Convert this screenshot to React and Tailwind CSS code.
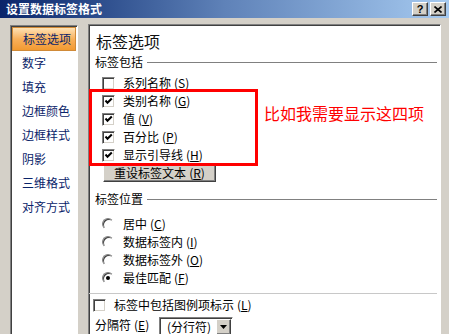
import React from 'react';

const items = ['标签选项', '数字', '填充', '边框颜色', '边框样式', '阴影', '三维格式', '对齐方式'];

function Key({ k }) {
  return (
    <span className="ml-[3px]">
      (<u>{k}</u>)
    </span>
  );
}

function CheckBox({ checked }) {
  return (
    <span className="w-[13px] h-[13px] shrink-0 bg-white border border-t-[#808080] border-l-[#808080] border-b-white border-r-white shadow-[inset_1px_1px_0_#404040,inset_-1px_-1px_0_#d4d0c8] flex items-center justify-center">
      {checked && (
        <svg width="9" height="9" viewBox="0 0 9 9">
          <path d="M1.5 3.5 L3.5 5.8 L7.8 1.5" stroke="#000" strokeWidth="2" fill="none" />
        </svg>
      )}
    </span>
  );
}

function Radio({ checked }) {
  return (
    <span className="w-[12px] h-[12px] shrink-0 rounded-full bg-white border border-t-[#808080] border-l-[#808080] border-b-white border-r-white shadow-[inset_1px_1px_0_#404040] flex items-center justify-center">
      {checked && <span className="w-[4px] h-[4px] rounded-full bg-black" />}
    </span>
  );
}

function Group({ title }) {
  return (
    <div className="h-[14px] flex items-center pl-[6px] pr-[3px]">
      <span>{title}</span>
      <div className="flex-1 h-px bg-[#808080] ml-[4px]" />
    </div>
  );
}

export default function App() {
  return (
    <div className="w-[449px] h-[334px] overflow-hidden bg-[#d4d0c8] flex flex-col text-[12px] leading-none text-black font-['Noto_Sans_CJK_SC','Liberation_Sans',sans-serif]">
      {/* title bar */}
      <div className="h-[18px] shrink-0 flex items-center bg-gradient-to-r from-[#0a246a] via-[#5f82b8] to-[#a6caf0] pl-[6px] pr-[3px]">
        <span className="text-white font-bold text-[12px]">设置数据标签格式</span>
        <div className="ml-auto flex gap-[2px]">
          <button className="w-[16px] h-[14px] bg-[#d4d0c8] border border-t-white border-l-white border-r-[#404040] border-b-[#404040] shadow-[inset_-1px_-1px_0_#808080] flex items-center justify-center text-[11px] font-bold font-['Liberation_Sans',sans-serif]">
            ?
          </button>
          <button className="w-[16px] h-[14px] bg-[#d4d0c8] border border-t-white border-l-white border-r-[#404040] border-b-[#404040] shadow-[inset_-1px_-1px_0_#808080] flex items-center justify-center">
            <svg width="8" height="7" viewBox="0 0 8 7">
              <path d="M0.5 0.5 L7.5 6.5 M7.5 0.5 L0.5 6.5" stroke="#000" strokeWidth="1.6" />
            </svg>
          </button>
        </div>
      </div>

      <div className="flex-1 flex pt-[7px]">
        {/* left list */}
        <div className="ml-[10px] w-[68px] bg-white border border-t-[#808080] border-l-[#808080] border-r-white border-b-white shadow-[inset_1px_1px_0_#404040] pt-[1px] px-[1px]">
          {items.map((t, i) => (
            <div
              key={t}
              className={`h-[24px] flex items-center pl-[10px] text-[#0a246a] text-[12px] ${
                i === 0
                  ? 'bg-gradient-to-b from-[#fde2b4] via-[#f8b05a] to-[#f29a30] border border-[#d08a38]'
                  : ''
              }`}
            >
              {t}
            </div>
          ))}
        </div>

        {/* right panel */}
        <div className="relative ml-[10px] w-[353px] -mt-[1px] bg-white border border-t-[#808080] border-l-[#808080] border-r-white border-b-white shadow-[inset_1px_1px_0_#404040]">
          <div className="flex flex-col pt-[6px]">
            <div className="h-[20px] flex items-center pl-[7px] text-[16px] text-[#111]">标签选项</div>
            <div className="mt-[4px]">
              <Group title="标签包括" />
            </div>
            <div className="mt-[5px] flex flex-col">
              {[
                ['系列名称', 'S', false],
                ['类别名称', 'G', true],
                ['值', 'V', true],
                ['百分比', 'P', true],
                ['显示引导线', 'H', true],
              ].map(([t, k, c]) => (
                <div key={t} className="h-[18px] flex items-center pl-[13px] gap-[8px]">
                  <CheckBox checked={c} />
                  <span>
                    {t}
                    <Key k={k} />
                  </span>
                </div>
              ))}
            </div>
            <div className="ml-[14px]">
              <button className="w-[113px] h-[18px] bg-[#d4d0c8] border border-t-white border-l-white border-r-[#404040] border-b-[#404040] shadow-[inset_-1px_-1px_0_#808080] flex items-center justify-center text-[12px]">
                重设标签文本
                <Key k="R" />
              </button>
            </div>
            <div className="mt-[10px]">
              <Group title="标签位置" />
            </div>
            <div className="mt-[9px] flex flex-col">
              {[
                ['居中', 'C', false],
                ['数据标签内', 'I', false],
                ['数据标签外', 'O', false],
                ['最佳匹配', 'F', true],
              ].map(([t, k, c]) => (
                <div key={t} className="h-[18px] flex items-center pl-[13px] gap-[9px]">
                  <Radio checked={c} />
                  <span>
                    {t}
                    <Key k={k} />
                  </span>
                </div>
              ))}
            </div>
            <div className="mt-[6px] h-px bg-[#c8c8c8] mr-[3px]" />
            <div className="mt-[2px] h-[18px] flex items-center pl-[4px] gap-[8px]">
              <CheckBox checked={false} />
              <span>
                标签中包括图例项标示
                <Key k="L" />
              </span>
            </div>
            <div className="h-[22px] flex items-center pl-[6px]">
              <span className="w-[64px]">
                分隔符
                <Key k="E" />
              </span>
              <div className="mt-[4px] w-[74px] h-[20px] bg-white border border-t-[#808080] border-l-[#808080] border-r-white border-b-white shadow-[inset_1px_1px_0_#404040] flex items-center">
                <span className="flex-1 text-center pl-[2px]">(分行符)</span>
                <span className="w-[15px] h-[16px] mr-[1px] bg-[#d4d0c8] border border-t-white border-l-white border-r-[#404040] border-b-[#404040] shadow-[inset_-1px_-1px_0_#808080] flex items-center justify-center">
                  <svg width="7" height="4" viewBox="0 0 7 4">
                    <path d="M0 0 H7 L3.5 4 Z" fill="#000" />
                  </svg>
                </span>
              </div>
            </div>
          </div>

          {/* annotation */}
          <div className="absolute left-0 top-[64px] w-[169px] h-[77px] border-[3px] border-[#ff0000]" />
          <div className="absolute left-[175px] top-[79px] text-[16px] leading-[18px] text-[#ff0000] whitespace-nowrap">
            比如我需要显示这四项
          </div>
        </div>
      </div>
    </div>
  );
}
